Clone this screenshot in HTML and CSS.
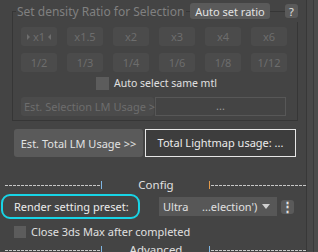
FILE: index.html
```html
<!DOCTYPE html>
<html>
	<head>
		<meta http-equiv="Content-Type" content="text/html; charset=utf-8">
		<title>Lightmap</title>
		<link rel="stylesheet" href="styles.css">
	</head>
	<body>
		<div class="panel">
			<div class="content">

				<div class="group">
					<div class="group-head">
						<span class="corner"></span>
						<span class="group-title">Set density Ratio for Selection</span>
						<span class="rule"></span>
						<button class="btn btn-small">Auto set ratio</button>
						<span class="rule rule-short"></span>
						<button class="btn btn-help">?</button>
					</div>
					<div class="group-body">
						<div class="ratio-grid">
							<button class="btn btn-off"><span class="tri tri-r"></span>x1<span class="tri tri-l"></span></button>
							<button class="btn btn-off">x1.5</button>
							<button class="btn btn-off">x2</button>
							<button class="btn btn-off">x3</button>
							<button class="btn btn-off">x4</button>
							<button class="btn btn-off">x6</button>
							<button class="btn btn-off">1/2</button>
							<button class="btn btn-off">1/3</button>
							<button class="btn btn-off">1/4</button>
							<button class="btn btn-off">1/6</button>
							<button class="btn btn-off">1/8</button>
							<button class="btn btn-off">1/12</button>
						</div>
						<label class="check check-auto"><span class="box"></span>Auto select same mtl</label>
						<div class="est-row">
							<button class="btn btn-off btn-est">Est. Selection LM Usage &gt;</button>
							<div class="field">...</div>
						</div>
					</div>
				</div>

				<div class="total-row">
					<button class="btn btn-total">Est. Total LM Usage &gt;&gt;</button>
					<div class="total-box">Total Lightmap usage: ...</div>
				</div>

				<div class="divider">
					<span class="dash dash-left"></span>
					<span class="tick"></span>
					<span class="divider-title">Config</span>
					<span class="tick tick-orange"></span>
					<span class="dash"></span>
				</div>

				<div class="preset-row">
					<div class="preset-label">Render setting preset:</div>
					<div class="select">
						<span class="select-a">Ultra</span>
						<span class="select-b">...election')</span>
						<span class="caret"></span>
					</div>
					<button class="btn btn-menu">&#8942;</button>
				</div>

				<label class="check check-close"><span class="box"></span>Close 3ds Max after completed</label>

				<div class="divider">
					<span class="dash dash-left"></span>
					<span class="tick"></span>
					<span class="divider-title">Advanced</span>
					<span class="tick"></span>
					<span class="dash"></span>
				</div>

			</div>
			<div class="scrollbar"><span class="scroll-track"></span></div>
		</div>
	</body>
</html>
```
FILE: styles.css
```css
body{
	margin: 0;
	padding: 0;
	overflow: hidden;
	height: 252px;
	background: #444;
	font-family: "Noto Sans", "Open Sans", sans-serif;
	font-size: 11px;
	color: #dcdcdc;
	white-space: nowrap;
}

.panel{
	display: flex;
	height: 252px;
}

.content{
	width: 306px;
	flex: none;
}

.scrollbar{
	flex: 1;
	display: flex;
	border-left: 1px solid #383838;
	background: #484848;
}

.scroll-track{
	margin-left: 6px;
	width: 5px;
	border-left: 1px solid #3a3a3a;
	background: #4b4b4b;
}

.btn{
	display: flex;
	align-items: center;
	justify-content: center;
	margin: 0;
	padding: 0;
	border: none;
	border-radius: 3px;
	background: #5a5a5a;
	color: #e2e2e2;
	font-family: inherit;
	font-size: 11px;
	line-height: 1;
	white-space: nowrap;
}

/* density group */
.group{
	margin-left: 12px;
	width: 286px;
}

.group-head{
	display: flex;
	align-items: center;
	height: 22px;
}

.corner{
	align-self: flex-end;
	width: 4px;
	height: 11px;
	border-top: 1px solid #363636;
	border-left: 1px solid #363636;
	box-sizing: border-box;
}

.group-title{
	padding-left: 1px;
	padding-right: 2px;
	color: #808080;
	font-size: 12px;
}

.rule{
	flex: 1;
	height: 1px;
	margin-top: 1px;
	background: #363636;
}

.rule-short{
	flex: none;
	width: 15px;
}

.btn-small{
	width: 80px;
	height: 16px;
}

.btn-help{
	width: 13px;
	height: 14px;
}

.group-body{
	border: 1px solid #363636;
	border-top: none;
	padding: 5px 0 4px 8px;
}

.ratio-grid{
	display: grid;
	grid-template-columns: repeat(6, 36px);
	grid-auto-rows: 19px;
	column-gap: 10px;
	row-gap: 7px;
}

.btn-off{
	background: #4b4b4b;
	color: #6d6d6d;
}

.tri{
	width: 0;
	height: 0;
	border-top: 3px solid transparent;
	border-bottom: 3px solid transparent;
}

.tri-r{
	border-left: 3px solid #6d6d6d;
	margin-right: 3px;
}

.tri-l{
	border-right: 3px solid #6d6d6d;
	margin-left: 3px;
}

.check{
	display: flex;
	align-items: center;
	height: 14px;
	color: #e0e0e0;
}

.box{
	width: 13px;
	height: 13px;
	margin-right: 5px;
	background: #5c5c5c;
}

.check-auto{
	margin-top: 4px;
	margin-left: 75px;
	font-size: 10.5px;
}

.est-row{
	display: flex;
	margin-top: 7px;
	height: 19px;
}

.btn-est{
	width: 133px;
	justify-content: flex-start;
	padding-left: 3px;
}

.field{
	width: 131px;
	margin-left: 1px;
	box-sizing: border-box;
	border: 1px solid #575757;
	background: #444;
	color: #9a9a9a;
	text-align: center;
	line-height: 15px;
}

/* totals */
.total-row{
	display: flex;
	margin-top: 8px;
	margin-left: 14px;
	height: 28px;
}

.btn-total{
	width: 129px;
}

.total-box{
	width: 151px;
	margin-left: 2px;
	box-sizing: border-box;
	border: 1px solid #e6e6e6;
	background: #3d3d3d;
	color: #ececec;
	text-align: center;
	line-height: 26px;
}

/* dividers */
.divider{
	display: flex;
	align-items: center;
	height: 12px;
	margin-top: 22px;
	margin-left: 5px;
}

.dash{
	flex: 1;
	height: 1px;
	background: repeating-linear-gradient(90deg, #c8c8c8 0 3px, transparent 3px 4px);
}

.dash-left{
	flex: none;
	width: 96px;
}

.tick{
	width: 1px;
	height: 8px;
	margin: 0 1px 0 0;
	background: #7fb6e4;
}

.tick-orange{
	background: #e39a4a;
}

.divider-title{
	width: 106px;
	text-align: center;
	color: #e0e0e0;
	line-height: 12px;
	font-size: 11.5px;
}

/* preset */
.preset-row{
	display: flex;
	align-items: center;
	margin-top: 3px;
	height: 25px;
}

.preset-label{
	width: 139px;
	height: 25px;
	margin-left: 1px;
	box-sizing: border-box;
	border: 2px solid #18d4e6;
	border-radius: 9px;
	padding-left: 11px;
	line-height: 21px;
	color: #ececec;
}

.select{
	display: flex;
	align-items: center;
	width: 118px;
	height: 19px;
	margin-left: 19px;
	background: #575757;
	color: #e0e0e0;
}

.select-a{
	margin-left: 4px;
	width: 39px;
}

.select-b{
	flex: 1;
}

.caret{
	width: 0;
	height: 0;
	margin-right: 7px;
	border-left: 4px solid transparent;
	border-right: 4px solid transparent;
	border-top: 5px solid #cfcfcf;
}

.btn-menu{
	width: 13px;
	height: 14px;
	margin-left: 4px;
	font-size: 13px;
	font-weight: bold;
}

.check-close{
	margin-top: 6px;
	margin-left: 14px;
	height: 13px;
}

.check-close .box{
	width: 12px;
	height: 12px;
}

.check-close + .divider{
	margin-top: 6px;
}
```
